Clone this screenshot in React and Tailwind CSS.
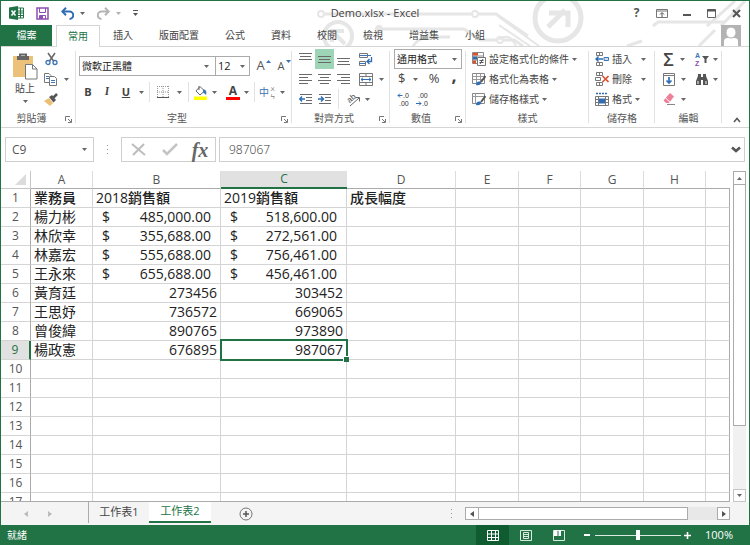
import { useState } from 'react'

const COLUMNS = ['A', 'B', 'C', 'D', 'E', 'F', 'G', 'H']

const ROWS = [
  { name: '楊力彬', y2018: '485,000.00', y2019: '518,600.00', currency: true },
  { name: '林欣幸', y2018: '355,688.00', y2019: '272,561.00', currency: true },
  { name: '林嘉宏', y2018: '555,688.00', y2019: '756,461.00', currency: true },
  { name: '王永來', y2018: '655,688.00', y2019: '456,461.00', currency: true },
  { name: '黃育廷', y2018: '273456', y2019: '303452' },
  { name: '王思妤', y2018: '736572', y2019: '669065' },
  { name: '曾俊緯', y2018: '890765', y2019: '973890' },
  { name: '楊政憲', y2018: '676895', y2019: '987067' },
]

const TABS = ['插入', '版面配置', '公式', '資料', '校閱', '檢視', '增益集', '小組']

const EMPTY_ROWS = [10, 11, 12, 13, 14, 15, 16, 17]

/* ---------- small shared pieces ---------- */

function Caret({ className = '' }) {
  return (
    <svg width="5" height="3" viewBox="0 0 5 3" className={`shrink-0 ${className}`} aria-hidden="true">
      <path d="M0 0h5L2.5 3z" fill="#666" />
    </svg>
  )
}

function Svg({ w = 16, h = 16, children, className = '' }) {
  return (
    <svg width={w} height={h} viewBox={`0 0 ${w} ${h}`} fill="none" className={`shrink-0 ${className}`} aria-hidden="true">
      {children}
    </svg>
  )
}

function Tool({ label, className = '', children }) {
  return (
    <button type="button" aria-label={label} className={`flex h-5 shrink-0 items-center justify-center ${className}`}>
      {children}
    </button>
  )
}

function Divider() {
  return <span className="h-5 w-px shrink-0 bg-[#e1e1e1]" />
}

function Group({ title, launcher, className = '', children }) {
  return (
    <section className={`relative flex shrink-0 flex-col ${className}`}>
      {children}
      <footer className={`mt-auto flex h-[18px] items-center justify-center text-[10px] text-[#555] ${launcher ? 'pr-[14px]' : ''}`}>
        {title}
        {launcher && (
          <button type="button" aria-label={`${title}設定`} className="absolute right-1 bottom-1">
            <Svg w={7} h={7}>
              <path d="M.5 5V.5H5M3 3l3 3M6.500 3v3.500H3" stroke="#777" />
            </Svg>
          </button>
        )}
      </footer>
      <span className="absolute top-1 right-0 bottom-1 w-px bg-[#e1e1e1]" />
    </section>
  )
}

function LinesIcon({ rows }) {
  return (
    <Svg w={13} h={14}>
      {rows.map(([x, y, w]) => (
        <path key={y} d={`M${x} ${y + 0.5}h${w}`} stroke="#6a6a6a" />
      ))}
    </Svg>
  )
}

/* ---------- title bar ---------- */

function Circuit() {
  return (
    <svg width="450" height="45" viewBox="300 1 450 45" fill="none" stroke="#e6e6e6" className="absolute top-0 right-0" aria-hidden="true">
      <g strokeWidth="2">
        <circle cx="322" cy="14" r="3" />
        <path d="M326 14h146M480 14h17l32 22" strokeWidth="3" />
        <circle cx="476" cy="14" r="3" />
        <circle cx="380" cy="29" r="3" fill="#e6e6e6" />
        <path d="M383 29h82l16 11h16M505 40h10l9 6" strokeWidth="3" />
        <circle cx="501" cy="40" r="3" />
        <path d="M414 46c5-7 10-9 19-9h18" strokeWidth="3" />
      </g>
      <circle cx="339" cy="36" r="14" strokeWidth="4" />
      <path d="M346 44l-12-12M333 42V31h12" strokeWidth="4" />
      <circle cx="559" cy="18" r="23" strokeWidth="5" />
      <path d="M549 27l17-17M550 13h19v14" strokeWidth="5" />
      <path d="M500 17l40 29M500 25l31 21" strokeWidth="2" />
      <path d="M500 40c4-5 11-4 14 1l3 5" strokeWidth="2" />
      <path d="M654 26l5-4h67M708 26l28-25M722 26l24-25M628 46l15-5M700 46l16-16" strokeWidth="3" />
    </svg>
  )
}

function TitleBar() {
  return (
    <div className="relative grid h-6 grid-cols-[1fr_auto_1fr] items-center">
      <div className="flex items-center pl-2">
        <Svg w={15} h={14}>
          <path d="M9 2h5.500v10H9M9 5h5M9 7h5M9 9.500h5M11.500 2v10" stroke="#217346" />
          <path d="M0 1.500L9 0v14L0 12.500z" fill="#217346" />
          <path d="M2.500 4.500l4 5M6.500 4.500l-4 5" stroke="#fff" strokeWidth="1.500" />
        </Svg>
        <button type="button" aria-label="儲存檔案" className="ml-3">
          <Svg w={13} h={13}>
            <path d="M1 1h11v11H1z" stroke="#8a4fb0" strokeWidth="1.500" />
            <path d="M3.500 1v4.500h6V1M3.500 12V8.500h6V12" stroke="#8a4fb0" />
            <path d="M4 9h3v3H4z" fill="#8a4fb0" />
          </Svg>
        </button>
        <button type="button" aria-label="復原" className="ml-3 flex items-center gap-1.5">
          <Svg w={13} h={13}>
            <path d="M1.500 4.500h7a3.500 3.500 0 0 1 0 7.500" stroke="#2f6db5" strokeWidth="2" />
            <path d="M5 .8L1.300 4.500 5 8.200" stroke="#2f6db5" strokeWidth="2" />
          </Svg>
          <Caret />
        </button>
        <button type="button" aria-label="重複" className="ml-3 flex items-center gap-1.5">
          <Svg w={13} h={13}>
            <path d="M11.500 4.500h-7a3.500 3.500 0 0 0 0 7.500" stroke="#b4b4b4" strokeWidth="2" />
            <path d="M8 .8l3.700 3.700L8 8.200" stroke="#b4b4b4" strokeWidth="2" />
          </Svg>
          <Caret className="opacity-50" />
        </button>
        <button type="button" aria-label="自訂快速存取工具列" className="ml-3">
          <Svg w={5} h={6}>
            <path d="M0 .5h5" stroke="#555" />
            <path d="M0 3h5L2.500 6z" fill="#555" />
          </Svg>
        </button>
      </div>
      <h1 className="text-[11px] text-[#444]">Demo.xlsx - Excel</h1>
      <div className="flex justify-end">
        <Tool label="說明" className="w-[25px] text-xs font-bold text-[#555]">?</Tool>
        <Tool label="功能區顯示選項" className="w-[25px]">
          <Svg w={12} h={9}>
            <path d="M.5.5h11v8H.5zM.5 2h11" stroke="#777" />
            <path d="M6 8V4M4 5.500L6 3.500l2 2" stroke="#555" />
          </Svg>
        </Tool>
        <Tool label="最小化" className="w-[25px]">
          <Svg w={9} h={9}><path d="M1 6h8" stroke="#555" strokeWidth="2" /></Svg>
        </Tool>
        <Tool label="最大化" className="w-[25px]">
          <Svg w={9} h={9}>
            <path d="M.5.5h8v8h-8z" stroke="#666" />
            <path d="M0 1.500h9" stroke="#555" strokeWidth="2" />
          </Svg>
        </Tool>
        <Tool label="關閉" className="w-[25px]">
          <Svg w={9} h={9}><path d="M1 1l7 7M8 1L1 8" stroke="#555" strokeWidth="2" /></Svg>
        </Tool>
      </div>
    </div>
  )
}

function TabRow() {
  return (
    <nav className="relative flex h-[22px] border-b border-[#d5d5d5] text-[10px] text-[#444]">
      <button type="button" className="w-[51px] bg-[#217346] text-white">檔案</button>
      <button type="button" className="-mb-px ml-1 w-11 border border-b-0 border-[#d5d5d5] bg-white text-[#217346]">常用</button>
      {TABS.map(tab => (
        <button key={tab} type="button" className="px-[13px]">{tab}</button>
      ))}
      <button type="button" aria-label="帳戶" className="mr-2 ml-auto self-end">
        <Svg w={20} h={21} className="bg-[#b3b3b3]">
          <path d="M3 21v-5c0-2 1.500-3 3.500-3h7c2 0 3.500 1 3.500 3v5z" fill="#fff" />
          <ellipse cx="10" cy="7.500" rx="5" ry="5.500" fill="#fff" stroke="#b3b3b3" />
        </Svg>
      </button>
    </nav>
  )
}

/* ---------- ribbon ---------- */

function ClipboardGroup() {
  return (
    <Group title="剪貼簿" launcher className="w-[75px]">
      <div className="flex pt-[2px]">
        <button type="button" className="ml-2 flex w-8 flex-col items-center pt-1 text-[10px] text-[#444]">
          <Svg w={26} h={27}>
            <path d="M1 3h20v21H1z" fill="#ecc27a" />
            <path d="M5 3h12v4H5z" fill="#666" />
            <path d="M8 3.500V1.500h6v2" stroke="#666" strokeWidth="2" />
            <path d="M13.500 11.500h7l4.500 4.500v10H13.500z" fill="#fff" stroke="#777" />
            <path d="M20.500 11.500V16H25" stroke="#777" />
          </Svg>
          <span className="mt-[2px] leading-3">貼上</span>
          <Caret className="mt-1.5" />
        </button>
        <div className="ml-0.5 flex flex-col">
          <Tool label="剪下" className="w-4">
            <Svg w={13} h={14}>
              <path d="M3 1l5.500 8M10 1L4.500 9" stroke="#666" strokeWidth="1.500" />
              <circle cx="3" cy="10.500" r="2" stroke="#3c74b5" strokeWidth="1.300" />
              <circle cx="10" cy="10.500" r="2" stroke="#3c74b5" strokeWidth="1.300" />
            </Svg>
          </Tool>
          <Tool label="複製" className="gap-1.5">
            <Svg w={15} h={13}>
              <path d="M1.500.5h4.500l2 2v7H1.500z" fill="#fff" stroke="#777" />
              <path d="M3 3.500h3M3 5.500h3" stroke="#3c74b5" />
              <path d="M6.500 3.500h5l2 2v7h-7z" fill="#fff" stroke="#777" />
              <path d="M8 7.500h4M8 9.500h4" stroke="#3c74b5" />
            </Svg>
            <Caret />
          </Tool>
          <Tool label="複製格式" className="w-4">
            <Svg w={14} h={13}>
              <path d="M0 8l5-3 4 5-3 3z" fill="#ecbf74" />
              <path d="M5 4l3-2 4 5-2.500 2.500z" fill="#555" />
              <path d="M9.500 4.500L13 1" stroke="#555" strokeWidth="2.500" />
            </Svg>
          </Tool>
        </div>
      </div>
    </Group>
  )
}

function FontGroup() {
  return (
    <Group title="字型" launcher className="w-[216px]">
      <div className="flex pt-[9px] pl-[3px]">
        <label className="relative flex h-5 w-[137px] items-center border border-[#ababab]">
          <select aria-label="字型名稱" className="h-full w-full appearance-none bg-transparent pl-0.5 text-[10px] text-[#222]">
            <option>微軟正黑體</option>
          </select>
          <Caret className="absolute right-1.5" />
        </label>
        <label className="relative -ml-px flex h-5 w-[35px] items-center border border-[#ababab]">
          <select aria-label="字型大小" className="h-full w-full appearance-none bg-transparent pl-0.5 text-[11px] text-[#222]">
            <option>12</option>
          </select>
          <Caret className="absolute right-1" />
        </label>
        <Tool label="放大字型" className="relative w-[21px] text-[13px] text-[#555]">
          A
          <Svg w={5} h={3} className="absolute top-1 right-0"><path d="M0 3h5L2.500 0z" fill="#3c74b5" /></Svg>
        </Tool>
        <Tool label="縮小字型" className="relative w-5 text-[11px] text-[#555]">
          A
          <Svg w={5} h={3} className="absolute top-1 right-0"><path d="M0 0h5L2.500 3z" fill="#3c74b5" /></Svg>
        </Tool>
      </div>
      <div className="mt-1.5 flex items-center pl-1 text-[11px] text-[#444]">
        <Tool label="粗體" className="w-4 font-bold">B</Tool>
        <Tool label="斜體" className="w-[22px] font-serif font-bold italic">I</Tool>
        <Tool label="底線" className="w-4 font-bold underline">U</Tool>
        <Tool label="底線樣式" className="w-[15px]"><Caret /></Tool>
        <Divider />
        <Tool label="框線" className="w-[38px] gap-2">
          <Svg w={12} h={12}>
            <path d="M.5 0v12M6 0v12M11.500 0v12M0 .5h12M0 6h12" stroke="#999" strokeDasharray="1 1" />
            <path d="M0 11.500h12" stroke="#555" />
          </Svg>
          <Caret />
        </Tool>
        <Divider />
        <Tool label="填滿色彩" className="w-[32px] gap-1">
          <Svg w={15} h={15}>
            <path d="M7 1.500l4.500 4.500L7 10 3 6zM6 1v4" stroke="#666" />
            <path d="M10 4.500c3 0 4 2 3 5.500-1-1-2-2-3-2.500z" fill="#3c74b5" />
            <path d="M1 11.500h13V15H1z" fill="#ffff00" />
          </Svg>
          <Caret />
        </Tool>
        <Tool label="字型色彩" className="w-[33px] gap-1">
          <span className="flex w-[14px] flex-col items-center border-b-[3px] border-[#f00] text-xs leading-3 font-bold">A</span>
          <Caret />
        </Tool>
        <Divider />
        <Tool label="注音標示" className="w-[34px] gap-1">
          <Svg w={17} h={16}>
            <text x="0" y="12" fontSize="10" fill="#3c74b5">中</text>
            <text x="11" y="6" fontSize="5" fill="#444">ㄨ</text>
            <text x="11" y="14" fontSize="5" fill="#444">ㄣ</text>
          </Svg>
          <Caret />
        </Tool>
      </div>
    </Group>
  )
}

function IndentIcon({ flip }) {
  return (
    <Svg w={14} h={12}>
      <path d="M1 1.500h12M7 4.500h6M7 7.500h6M1 10.500h12" stroke="#6a6a6a" />
      <path d={flip ? 'M0 6h5M3 3.500L5.500 6 3 8.500' : 'M6 6H1M3 3.500L.7 6 3 8.500'} stroke="#2f6db5" strokeWidth="1.500" />
    </Svg>
  )
}

function AlignGroup() {
  return (
    <Group title="對齊方式" launcher className="w-[98px]">
      <div className="flex pt-[2px] pl-1">
        <Tool label="靠上對齊" className="w-[19px]"><LinesIcon rows={[[0, 1, 13], [1, 4, 11], [0, 7, 13]]} /></Tool>
        <Tool label="置中對齊" className="w-[19px] bg-[#9fd5b7]"><LinesIcon rows={[[0, 4, 13], [1, 7, 11], [0, 10, 13]]} /></Tool>
        <Tool label="靠下對齊" className="w-[19px]"><LinesIcon rows={[[0, 6, 13], [1, 9, 11], [0, 12, 13]]} /></Tool>
        <Tool label="自動換列" className="ml-1 w-[18px]">
          <Svg w={14} h={13}>
            <path d="M.5.5h8v4h-8zM.5 8.500h6v4h-6z" stroke="#777" />
            <path d="M0 2.500h12M0 10.500h7" stroke="#3c74b5" />
            <path d="M12.500 4v4.500H8.500M10.500 6L8 8.500l2.500 2.500" stroke="#2f6db5" strokeWidth="1.300" />
          </Svg>
        </Tool>
      </div>
      <div className="flex pl-1">
        <Tool label="靠左" className="w-[19px]"><LinesIcon rows={[[0, 2, 13], [0, 5, 9], [0, 8, 13], [0, 11, 9]]} /></Tool>
        <Tool label="置中" className="w-[19px]"><LinesIcon rows={[[0, 2, 13], [2, 5, 9], [0, 8, 13], [2, 11, 9]]} /></Tool>
        <Tool label="靠右" className="w-[19px]"><LinesIcon rows={[[0, 2, 13], [4, 5, 9], [0, 8, 13], [4, 11, 9]]} /></Tool>
        <Tool label="跨欄置中" className="ml-1 gap-1.5 pl-0.5">
          <Svg w={14} h={13}>
            <path d="M.5.5h13v12H.5zM.5 3.500h13M.5 9.500h13M7 .5v3M7 9.500v3" stroke="#777" />
            <path d="M2 6.500h10M4 4.800L2 6.500l2 1.700M10 4.800l2 1.700-2 1.700" stroke="#2f6db5" />
          </Svg>
          <Caret />
        </Tool>
      </div>
      <div className="flex pl-1">
        <Tool label="減少縮排" className="w-[19px]"><IndentIcon /></Tool>
        <Tool label="增加縮排" className="w-[19px]"><IndentIcon flip /></Tool>
        <span className="mx-1 h-5 w-px bg-[#e1e1e1]" />
        <Tool label="方向" className="w-7 gap-1">
          <Svg w={16} h={16}>
            <text x="3" y="12" fontSize="8" fontFamily="Liberation Sans, sans-serif" fill="#444" transform="rotate(-40 4 10)">ab</text>
            <path d="M5 15l9-8M10.500 6.500H14.500v4" stroke="#666" />
          </Svg>
          <Caret />
        </Tool>
      </div>
    </Group>
  )
}

function NumberGroup() {
  return (
    <Group title="數值" launcher className="w-[76px]">
      <div className="px-1 pt-[2px]">
        <label className="relative flex h-5 items-center border border-[#ababab]">
          <select aria-label="數值格式" className="h-full w-full appearance-none bg-transparent pl-0.5 text-[10px] text-[#222]">
            <option>通用格式</option>
          </select>
          <Caret className="absolute right-1" />
        </label>
      </div>
      <div className="flex pl-2 text-[13px] text-[#444]">
        <Tool label="會計數字格式" className="w-7 justify-start gap-2">$<Caret /></Tool>
        <Tool label="百分比樣式" className="w-4">%</Tool>
        <Tool label="千分位樣式" className="ml-1 w-4 pb-2 text-lg leading-3 font-bold">,</Tool>
      </div>
      <div className="flex gap-1 pl-1.5 font-['Liberation_Sans',sans-serif]">
        <Tool label="增加小數位數" className="w-[15px]">
          <Svg w={14} h={16}>
            <path d="M5.500 4.500H1M3 2.500l-2 2 2 2" stroke="#2f6db5" />
            <text x="6" y="7" fontSize="7" fill="#333">.0</text>
            <text x="2" y="15" fontSize="7" fill="#333">.00</text>
          </Svg>
        </Tool>
        <Tool label="減少小數位數" className="w-[15px]">
          <Svg w={14} h={16}>
            <text x="2" y="7" fontSize="7" fill="#333">.00</text>
            <path d="M0 12.500h5M3 10.500l2 2-2 2" stroke="#2f6db5" />
            <text x="6" y="15" fontSize="7" fill="#333">.0</text>
          </Svg>
        </Tool>
      </div>
    </Group>
  )
}

function SheetBrush({ plain }) {
  return (
    <Svg w={14} h={14}>
      <path d="M.5 1.500h12v10H.5z" fill="#fff" stroke="#888" />
      <path d={plain ? 'M.5 4.500h12M3.500 1.500v10' : 'M.5 4.500h12M.5 7.500h12M4.500 1.500v10M8.500 1.500v10'} stroke="#999" />
      <path d="M4 13c0-3 2-4 4-3.500l1.500 1.500C8.500 13 6 13.500 4 13z" fill="#2f6db5" />
      <path d="M9 10l4.500-6" stroke="#555" strokeWidth="2" />
    </Svg>
  )
}

function StylesGroup() {
  return (
    <Group title="樣式" className="w-[123px]">
      <div className="flex flex-col items-start pt-[2px] pl-1.5 text-[10px] text-[#444]">
        <button type="button" className="flex h-5 items-center gap-[3px]">
          <Svg w={14} h={14}>
            <path d="M.5.500h11v11H.5zM.5 4h11M.5 8h11" fill="#fff" stroke="#888" />
            <path d="M1 1h5v2.500H1z" fill="#e0502f" />
            <path d="M1 4.500h4v3H1z" fill="#2f6db5" />
            <path d="M1 8.500h3v3H1z" fill="#e0502f" />
            <path d="M5.500 5.500h8v8h-8z" fill="#fff" stroke="#777" />
            <path d="M7.500 8.500h4M7.500 10.500h4M11 7l-3 5" stroke="#555" />
          </Svg>
          設定格式化的條件
          <Caret />
        </button>
        <button type="button" className="flex h-5 items-center gap-[3px]">
          <SheetBrush />
          格式化為表格
          <Caret />
        </button>
        <button type="button" className="flex h-5 items-center gap-[3px]">
          <SheetBrush plain />
          儲存格樣式
          <Caret />
        </button>
      </div>
    </Group>
  )
}

function CellsGroup() {
  return (
    <Group title="儲存格" className="w-[66px]">
      <div className="flex flex-col items-start pt-[2px] pl-1.5 text-[10px] text-[#444]">
        <button type="button" className="flex h-5 items-center gap-[3px]">
          <Svg w={14} h={14}>
            <path d="M1.500.5h6v3h-6zM4.500.500v3M1.500 10.500h6v3h-6zM4.500 10.500v3" stroke="#777" />
            <path d="M9 5.500h4.500v3H9z" fill="#cfe0f3" stroke="#3c74b5" />
            <path d="M8 7H1M3.500 4.500L1 7l2.500 2.500" stroke="#2f6db5" strokeWidth="1.500" />
          </Svg>
          插入
          <Caret className="ml-1.5" />
        </button>
        <button type="button" className="flex h-5 items-center gap-[3px]">
          <Svg w={14} h={14}>
            <path d="M1.500.5h6v3h-6zM4.500.500v3M.5 5.500h5v3h-5zM1.500 10.500h6v3h-6zM4.500 10.500v3" stroke="#777" />
            <path d="M7.500 4l6 6M13.500 4l-6 6" stroke="#e0502f" strokeWidth="1.600" />
          </Svg>
          刪除
          <Caret className="ml-1.5" />
        </button>
        <button type="button" className="flex h-5 items-center gap-[3px]">
          <Svg w={14} h={14}>
            <path d="M1 1.500h12" stroke="#2f6db5" strokeWidth="1.500" strokeDasharray="2 1" />
            <path d="M.5 4.500h13v9H.5zM.5 7.500h13M.5 10.500h13M3.500 4.500v9M10.500 4.500v9" stroke="#777" />
            <path d="M4 6.500h6v5H4z" fill="#2f6db5" />
          </Svg>
          格式
          <Caret />
        </button>
      </div>
    </Group>
  )
}

function EditGroup() {
  return (
    <Group title="編輯" className="w-[67px]">
      <div className="grid grid-cols-[30px_30px] pt-[2px] pl-1">
        <Tool label="自動加總" className="gap-1.5 text-[18px] leading-5 font-semibold text-[#444]">Σ<Caret /></Tool>
        <Tool label="排序與篩選" className="gap-1 pl-1">
          <Svg w={14} h={16} className="font-['Liberation_Sans',sans-serif]">
            <text x="0" y="7" fontSize="7" fontWeight="bold" fill="#3c74b5">A</text>
            <text x="0" y="15" fontSize="7" fontWeight="bold" fill="#8a4fb0">Z</text>
            <path d="M7 5h7l-2.500 3v4h-2V8z" fill="#555" />
          </Svg>
          <Caret />
        </Tool>
        <Tool label="填滿" className="gap-1.5">
          <Svg w={12} h={13}>
            <path d="M.5.5h11v12H.5zM.5 2.500h11" stroke="#777" />
            <path d="M6 4v6M3.500 7.500L6 10l2.500-2.500" stroke="#2f6db5" strokeWidth="1.700" />
          </Svg>
          <Caret />
        </Tool>
        <Tool label="尋找與選取" className="gap-1 pl-1">
          <Svg w={14} h={12}>
            <path d="M3 1h3v3h2V1h3v2l2 5v4H8V7H6v5H1V8l2-5z" fill="#555" />
            <path d="M3 8v3M11 8v3" stroke="#fff" />
          </Svg>
          <Caret />
        </Tool>
        <Tool label="清除" className="gap-1.5">
          <Svg w={12} h={12}>
            <path d="M7 0l4 3.500L6 10H3L.5 7.500z" fill="#ef7f96" />
            <path d="M2.500 5l4.500 4" stroke="#fff" />
            <path d="M4 11.500h8" stroke="#888" />
          </Svg>
          <Caret />
        </Tool>
      </div>
    </Group>
  )
}

function Ribbon() {
  return (
    <div className="flex h-[81px] shrink-0 border-b border-[#d5d5d5] bg-white">
      <ClipboardGroup />
      <FontGroup />
      <AlignGroup />
      <NumberGroup />
      <StylesGroup />
      <CellsGroup />
      <EditGroup />
      <button type="button" aria-label="摺疊功能區" className="mr-2 mb-1 ml-auto self-end">
        <Svg w={8} h={6}><path d="M1 5l3-3.500L7 5" stroke="#555" strokeWidth="1.500" /></Svg>
      </button>
    </div>
  )
}

/* ---------- formula bar ---------- */

function FormulaBar({ value, onChange }) {
  return (
    <div className="flex shrink-0 items-center px-1 py-[9px] text-[#555]">
      <div className="relative flex h-[25px] w-[89px] items-center border border-[#cfcfcf]">
        <input aria-label="名稱方塊" defaultValue="C9" className="w-full pl-1.5 text-xs outline-none" />
        <Caret className="absolute right-1.5" />
      </div>
      <Svg w={3} h={9} className="mx-3">
        <path d="M1 .5h1M1 4.500h1M1 8.500h1" stroke="#999" />
      </Svg>
      <div className="flex h-[25px] w-[95px] items-center border border-[#cfcfcf]">
        <Tool label="取消" className="w-8">
          <Svg w={15} h={13}><path d="M1 1l13 11M13 1L2 12" stroke="#bdbdbd" strokeWidth="2" /></Svg>
        </Tool>
        <Tool label="輸入" className="w-8">
          <Svg w={16} h={13}><path d="M1 7l4 4L15 1" stroke="#c4c4c4" strokeWidth="2.500" /></Svg>
        </Tool>
        <Tool label="插入函數" className="w-7 font-['Liberation_Serif',serif] text-[20px] leading-5 font-bold text-[#666] italic">fx</Tool>
      </div>
      <div className="ml-[3px] flex h-[25px] flex-1 items-center border border-[#cfcfcf]">
        <input
          aria-label="資料編輯列" value={value} onChange={e => onChange(e.target.value)}
          className="min-w-0 flex-1 pl-[9px] text-xs font-light text-[#333] outline-none"
        />
        <Tool label="展開資料編輯列" className="w-4">
          <Svg w={10} h={7}><path d="M1 1.500l4 3.500 4-3.500" stroke="#555" strokeWidth="2.500" /></Svg>
        </Tool>
      </div>
    </div>
  )
}

/* ---------- sheet ---------- */

function RowHeader({ n, active }) {
  return (
    <th scope="row" className={`border-b border-[#d4d4d4] p-0 text-center text-xs leading-[18px] font-normal ${active ? 'border-r-2 border-r-[#217346] bg-[#e1e1e1] text-[#217346]' : 'border-r border-r-[#ababab] text-[#555]'}`}>
      {n}
    </th>
  )
}

function Cell({ children, className = '' }) {
  return (
    <td className={`relative border-r border-b border-[#d4d4d4] px-[3px] py-0 leading-[18px] whitespace-nowrap ${className}`}>
      {children}
    </td>
  )
}

function Amount({ value, currency, selected }) {
  return (
    <Cell className="text-right">
      {currency ? (
        <span className="flex justify-between px-1.5"><span>$</span>{value}</span>
      ) : value}
      {selected && (
        <span className="absolute -top-0.5 -right-0.5 -bottom-0.5 -left-px z-10 border-2 border-[#217346]">
          <span className="absolute -right-[3px] -bottom-[3px] size-[6px] border-t border-l border-white bg-[#217346]" />
        </span>
      )}
    </Cell>
  )
}

function Fillers({ count }) {
  return Array.from({ length: count }, (_, i) => <Cell key={i} />)
}

function Sheet({ selectedValue }) {
  return (
    <div className="flex min-h-0 flex-1">
      <div className="min-w-0 flex-1 overflow-hidden border-b border-[#ababab]">
        <table className="w-full table-fixed border-separate border-spacing-0 text-sm text-[#222]">
          <colgroup>
            <col className="w-[30px]" />
            <col className="w-[62px]" />
            <col className="w-32" />
            <col className="w-[126px]" />
            <col className="w-[109px]" />
            <col className="w-[63px]" />
            <col className="w-[62px]" />
            <col className="w-[63px]" />
            <col className="w-[62px]" />
            <col />
          </colgroup>
          <thead>
            <tr className="h-[18px]">
              <th className="border-r border-b border-[#c6c6c6] p-0">
                <Svg w={15} h={12} className="ml-auto"><path d="M11 0v11H0z" fill="#dcdcdc" /></Svg>
              </th>
              {COLUMNS.map(col => (
                <th
                  key={col} scope="col"
                  className={`p-0 text-xs leading-4 font-normal ${col === 'C' ? 'border-b-2 border-[#217346] bg-[#e1e1e1] text-[#217346]' : 'border-r border-b border-r-[#dcdcdc] border-b-[#ababab] text-[#555]'}`}
                >
                  {col}
                </th>
              ))}
              <th className="border-b border-[#ababab] p-0" />
            </tr>
          </thead>
          <tbody className="[&_td:last-child]:border-r-[#ababab]">
            <tr className="h-[19px]">
              <RowHeader n={1} />
              <Cell className="font-medium">業務員</Cell>
              <Cell className="font-medium">2018銷售額</Cell>
              <Cell className="font-medium">2019銷售額</Cell>
              <Cell className="font-medium">成長幅度</Cell>
              <Fillers count={5} />
            </tr>
            {ROWS.map((row, i) => {
              const selected = i === ROWS.length - 1
              return (
                <tr key={row.name} className="h-[19px]">
                  <RowHeader n={i + 2} active={selected} />
                  <Cell>{row.name}</Cell>
                  <Amount value={row.y2018} currency={row.currency} />
                  <Amount value={selected ? selectedValue : row.y2019} currency={row.currency} selected={selected} />
                  <Fillers count={6} />
                </tr>
              )
            })}
            {EMPTY_ROWS.map(n => (
              <tr key={n} className="h-[19px]">
                <RowHeader n={n} />
                <Fillers count={9} />
              </tr>
            ))}
          </tbody>
        </table>
      </div>
      <div className="mx-[3px] flex w-[13px] flex-col bg-[#f1f1f1]">
        <button type="button" aria-label="向上捲動" className="flex h-[14px] items-center justify-center border border-[#ababab] bg-white">
          <Caret className="rotate-180" />
        </button>
        <div className="-mt-px h-[73%] border border-[#ababab] bg-white" />
        <button type="button" aria-label="向下捲動" className="mt-auto flex h-[13px] items-center justify-center border border-[#c6c6c6] bg-white">
          <Caret />
        </button>
      </div>
    </div>
  )
}

function SheetTabs() {
  return (
    <div className="flex h-[23px] shrink-0 bg-[#f4f4f4] text-[11px] text-[#444]">
      <div className="flex w-[87px] items-center gap-5 pl-[23px]">
        <button type="button" aria-label="上一張工作表"><Svg w={4} h={6}><path d="M4 0v6L0 3z" fill="#bbb" /></Svg></button>
        <button type="button" aria-label="下一張工作表"><Svg w={4} h={6}><path d="M0 0v6l4-3z" fill="#bbb" /></Svg></button>
      </div>
      <button type="button" className="h-[21px] w-[61px] border-l border-[#ababab]">工作表1</button>
      <button type="button" className="h-[21px] w-[62px] border-b-2 border-[#217346] bg-white text-[#217346]">工作表2</button>
      <button type="button" aria-label="新增工作表" className="ml-7">
        <Svg w={14} h={14}>
          <circle cx="7" cy="7" r="6" stroke="#777" />
          <path d="M7 4v6M4 7h6" stroke="#555" strokeWidth="1.500" />
        </Svg>
      </button>
      <div className="mr-[19px] ml-auto flex items-center">
        <Svg w={3} h={9} className="mr-3">
          <path d="M1 .5h1M1 4.500h1M1 8.500h1" stroke="#999" />
        </Svg>
        <div className="flex h-[13px] w-[265px] bg-[#e8e8e8]">
          <button type="button" aria-label="向左捲動" className="flex w-[14px] items-center justify-center border border-[#ababab] bg-white">
            <Svg w={4} h={6}><path d="M4 0v6L0 3z" fill="#555" /></Svg>
          </button>
          <div className="-ml-px w-[210px] border border-[#ababab] bg-white" />
          <button type="button" aria-label="向右捲動" className="ml-auto flex w-[13px] items-center justify-center border border-[#ababab] bg-white">
            <Svg w={4} h={6}><path d="M0 0v6l4-3z" fill="#555" /></Svg>
          </button>
        </div>
      </div>
    </div>
  )
}

function StatusBar() {
  const [zoom, setZoom] = useState(50)

  return (
    <footer className="flex h-5 shrink-0 items-center bg-[#217346] pl-1.5 text-[10px] text-white">
      <span>就緒</span>
      <Tool label="標準模式" className="ml-auto w-[33px] bg-[#0e5c2f]">
        <Svg w={12} h={11}><path d="M.5.5h11v10H.5zM4.500.5v10M8.500.5v10M.5 4h11M.5 7.500h11" stroke="#fff" /></Svg>
      </Tool>
      <Tool label="整頁模式" className="w-[33px]">
        <Svg w={12} h={11}>
          <path d="M.5.5h11v10H.5zM3.500 2.500h5v6h-5z" stroke="#dcebe2" />
          <path d="M4 4.500h4M4 6.500h4" stroke="#dcebe2" />
        </Svg>
      </Tool>
      <Tool label="分頁預覽" className="w-[33px]">
        <Svg w={12} h={11}>
          <path d="M.5.5h11v10H.5z" stroke="#dcebe2" />
          <path d="M1 0h3.500v6H1zM5.500 0H8v6H5.500z" fill="#fff" />
        </Svg>
      </Tool>
      <Tool label="縮小" className="ml-1 w-4">
        <Svg w={6} h={6}><path d="M0 3h6" stroke="#fff" strokeWidth="2" /></Svg>
      </Tool>
      <input
        type="range" aria-label="顯示比例" min="0" max="100" value={zoom} onChange={e => setZoom(Number(e.target.value))}
        className="h-[10px] w-[86px] appearance-none bg-transparent [&::-webkit-slider-runnable-track]:h-px [&::-webkit-slider-runnable-track]:bg-[#dcebe2] [&::-webkit-slider-thumb]:-mt-[5px] [&::-webkit-slider-thumb]:h-[10px] [&::-webkit-slider-thumb]:w-1 [&::-webkit-slider-thumb]:appearance-none [&::-webkit-slider-thumb]:bg-white"
      />
      <Tool label="放大" className="w-3">
        <Svg w={7} h={7}><path d="M0 3.500h7M3.500 0v7" stroke="#fff" strokeWidth="1.600" /></Svg>
      </Tool>
      <span className="mr-4 ml-3 text-[11px]">100%</span>
    </footer>
  )
}

export default function App() {
  const [value, setValue] = useState('987067')

  return (
    <div className="flex h-screen flex-col overflow-hidden border border-b-0 border-[#217346] bg-white font-['Open_Sans','Noto_Sans_CJK_TC',sans-serif]">
      <header className="relative shrink-0">
        <Circuit />
        <TitleBar />
        <TabRow />
      </header>
      <Ribbon />
      <FormulaBar value={value} onChange={setValue} />
      <Sheet selectedValue={value} />
      <SheetTabs />
      <StatusBar />
    </div>
  )
}
